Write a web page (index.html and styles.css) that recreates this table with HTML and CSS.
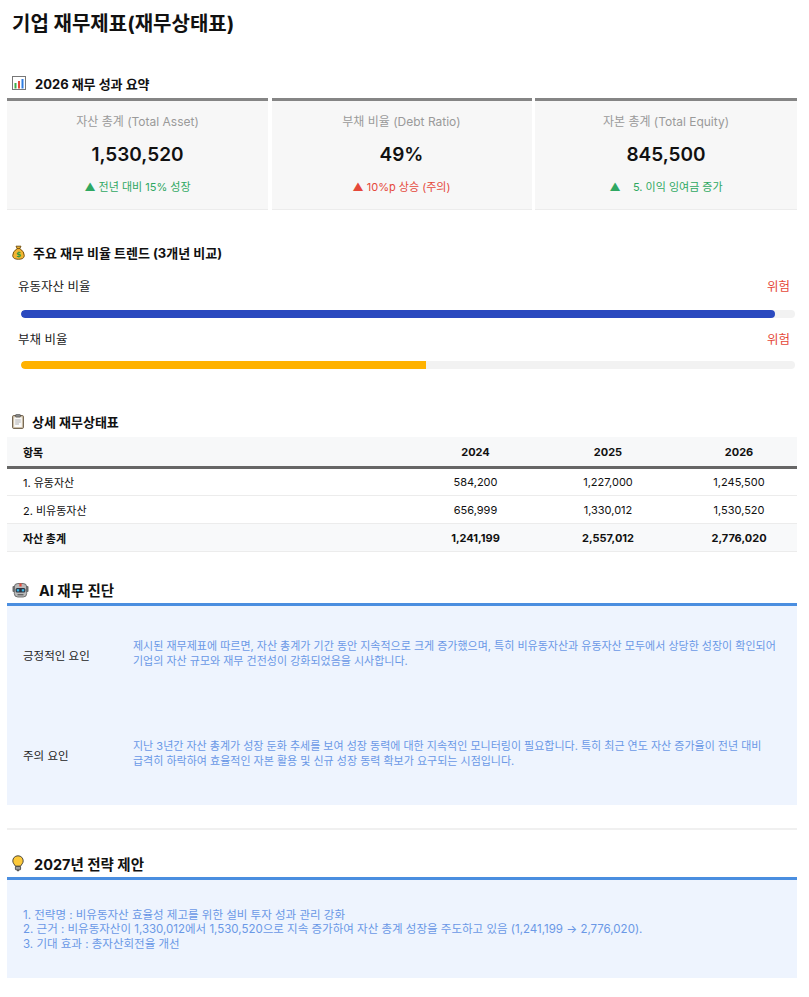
FILE: index.html
```html
<!DOCTYPE html>
<html lang="ko">
<head>
<meta charset="utf-8">
<title>기업 재무제표(재무상태표)</title>
<link rel="stylesheet" href="styles.css">
</head>
<body>
<div class="page">
  <h1 class="title">기업 재무제표(재무상태표)</h1>

  <h2 class="sec sec-1">
    <svg class="ico" width="14" height="14" viewBox="0 0 14 14"><rect x="0.5" y="0.5" width="13" height="13" fill="#fff" stroke="#777"/><rect x="2.5" y="7" width="2" height="5.5" fill="#3fae49"/><rect x="6" y="5" width="2" height="7.5" fill="#e5483a"/><rect x="9.5" y="3" width="2" height="9.5" fill="#2f7de1"/></svg>
    <span>2026 재무 성과 요약</span>
  </h2>
  <div class="cards">
    <div class="card">
      <div class="card-label">자산 총계 (Total Asset)</div>
      <div class="card-value">1,530,520</div>
      <div class="card-change up">▲ 전년 대비 15% 성장</div>
    </div>
    <div class="card">
      <div class="card-label">부채 비율 (Debt Ratio)</div>
      <div class="card-value">49%</div>
      <div class="card-change warn">▲ 10%p 상승 (주의)</div>
    </div>
    <div class="card">
      <div class="card-label">자본 총계 (Total Equity)</div>
      <div class="card-value">845,500</div>
      <div class="card-change up pre">▲    5. 이익 잉여금 증가</div>
    </div>
  </div>

  <h2 class="sec sec-2">
    <svg class="ico" width="13" height="15" viewBox="0 0 13 15"><path d="M4 1.2 L9 1.2 L7.8 3.6 Q12.6 6.5 12.3 10.8 Q12 14.3 6.5 14.3 Q1 14.3 0.7 10.8 Q0.4 6.5 5.2 3.6 Z" fill="#f2b531" stroke="#6b4a0c" stroke-width="0.9"/><path d="M5 3.6 L8 3.6" stroke="#6b4a0c" stroke-width="0.9"/><text x="6.5" y="12.2" font-size="7.5" font-weight="700" text-anchor="middle" fill="#2e9a3d" font-family="DejaVu Sans">$</text></svg>
    <span>주요 재무 비율 트렌드 (3개년 비교)</span>
  </h2>
  <div class="trends">
    <div class="trend">
      <div class="trend-head"><span>유동자산 비율</span><span class="risk">위험</span></div>
      <div class="track"><div class="fill blue" style="width:97.4%"></div></div>
    </div>
    <div class="trend">
      <div class="trend-head"><span>부채 비율</span><span class="risk">위험</span></div>
      <div class="track"><div class="fill orange" style="width:52.3%"></div></div>
    </div>
  </div>

  <h2 class="sec sec-3">
    <svg class="ico" width="12" height="15" viewBox="0 0 12 15"><rect x="0.6" y="1.6" width="10.8" height="12.8" rx="1" fill="#d9cdb6" stroke="#5a4a33" stroke-width="0.9"/><rect x="2.2" y="3.4" width="7.6" height="9.6" fill="#fafafa"/><rect x="3.6" y="0.5" width="4.8" height="2.6" rx="0.6" fill="#8a8a8a" stroke="#444" stroke-width="0.6"/><path d="M3.2 6 H8.8 M3.2 8 H8.8 M3.2 10 H7" stroke="#9a9a9a" stroke-width="0.8"/></svg>
    <span>상세 재무상태표</span>
  </h2>
  <table class="fin">
    <colgroup><col class="c1"><col class="c2"><col class="c3"><col class="c4"></colgroup>
    <thead>
      <tr><th class="item">항목</th><th>2024</th><th>2025</th><th class="last">2026</th></tr>
    </thead>
    <tbody>
      <tr><td class="item">1. 유동자산</td><td>584,200</td><td>1,227,000</td><td class="last">1,245,500</td></tr>
      <tr><td class="item">2. 비유동자산</td><td>656,999</td><td>1,330,012</td><td class="last">1,530,520</td></tr>
      <tr class="total"><td class="item">자산 총계</td><td>1,241,199</td><td>2,557,012</td><td class="last">2,776,020</td></tr>
    </tbody>
  </table>

  <h2 class="sec sec-4 big">
    <svg class="ico robot" width="17" height="16" viewBox="0 0 17 16"><rect x="0.5" y="4" width="2.6" height="6" rx="1" fill="#6f6f6f"/><rect x="13.9" y="4" width="2.6" height="6" rx="1" fill="#6f6f6f"/><rect x="2.3" y="1.5" width="12.4" height="13.5" rx="3.5" fill="#b9b9b9" stroke="#555" stroke-width="0.8"/><rect x="7.4" y="1.5" width="2.2" height="3" fill="#e84a3a"/><rect x="3.6" y="6" width="9.8" height="4.6" rx="1.5" fill="#2f3440"/><rect x="4.8" y="7.2" width="2.4" height="2.2" fill="#37b7e8"/><rect x="9.8" y="7.2" width="2.4" height="2.2" fill="#37b7e8"/><rect x="5.5" y="12" width="6" height="1.4" fill="#666"/></svg>
    <span>AI 재무 진단</span>
  </h2>
  <div class="diag">
    <div class="diag-row">
      <div class="diag-label">긍정적인 요인</div>
      <div class="diag-text">제시된 재무제표에 따르면, 자산 총계가 기간 동안 지속적으로 크게 증가했으며, 특히 비유동자산과 유동자산 모두에서 상당한 성장이 확인되어 기업의 자산 규모와 재무 건전성이 강화되었음을 시사합니다.</div>
    </div>
    <div class="diag-row">
      <div class="diag-label">주의 요인</div>
      <div class="diag-text">지난 3년간 자산 총계가 성장 둔화 추세를 보여 성장 동력에 대한 지속적인 모니터링이 필요합니다. 특히 최근 연도 자산 증가율이 전년 대비 급격히 하락하여 효율적인 자본 활용 및 신규 성장 동력 확보가 요구되는 시점입니다.</div>
    </div>
  </div>

  <div class="divider"></div>

  <h2 class="sec sec-5 big">
    <svg class="ico" width="12" height="17" viewBox="0 0 12 17"><path d="M6 0.8 C2.8 0.8 0.8 3.2 0.8 5.9 C0.8 8.4 2.6 9.4 3.4 11.2 L8.6 11.2 C9.4 9.4 11.2 8.4 11.2 5.9 C11.2 3.2 9.2 0.8 6 0.8 Z" fill="#fcc93a" stroke="#3a3a3a" stroke-width="0.9"/><rect x="3.4" y="11.4" width="5.2" height="3.4" rx="0.6" fill="#9a9a9a" stroke="#3a3a3a" stroke-width="0.8"/><path d="M4.6 15 H7.4 L6.8 16.3 H5.2 Z" fill="#555"/></svg>
    <span>2027년 전략 제안</span>
  </h2>
  <div class="strategy">
    <p>1. 전략명 : 비유동자산 효율성 제고를 위한 설비 투자 성과 관리 강화</p>
    <p>2. 근거 : 비유동자산이 1,330,012에서 1,530,520으로 지속 증가하여 자산 총계 성장을 주도하고 있음 (1,241,199 → 2,776,020).</p>
    <p>3. 기대 효과 : 총자산회전율 개선</p>
  </div>
</div>
</body>
</html>
```

FILE: styles.css
```css
* { box-sizing: border-box; }
html, body { margin: 0; padding: 0; background: #fff; }
body {
  font-family: "Inter", "Noto Sans CJK KR", "Noto Sans", sans-serif;
  color: #111;
}
.page {
  width: 790px;
  margin-left: 7px;
}
.title {
  margin: 0;
  padding: 9px 5px 0;
  font-size: 20px;
  line-height: 30px;
  font-weight: 700;
  color: #111;
}
.sec {
  display: flex;
  align-items: center;
  gap: 8px;
  margin: 0;
  padding-left: 5px;
  height: 20px;
  font-size: 13px;
  font-weight: 700;
  color: #111;
}
.sec.big { font-size: 14.5px; }
.ico { flex: none; }
.sec-1 { margin-top: 34px; margin-bottom: 5px; }
.sec-1 .ico { margin-right: 1px; }
.sec-2 { margin-top: 32px; }
.sec-3 { margin-top: 42px; margin-bottom: 6px; }
.sec-4 { margin-top: 28px; margin-bottom: 3px; gap: 10px; }
.sec-5 { margin-top: 24px; margin-bottom: 3px; gap: 10px; }

.cards {
  display: grid;
  grid-template-columns: 261px 260px 262px;
  column-gap: 3.5px;
}
.card {
  background: #f7f7f7;
  border-top: 3px solid #858585;
  border-bottom: 1px solid #ececec;
  padding: 12px 0 14px;
  text-align: center;
}
.card-label {
  font-size: 12px;
  line-height: 18px;
  color: #9a9a9a;
}
.card-value {
  margin-top: 11px;
  font-size: 19px;
  line-height: 26px;
  font-weight: 600;
  color: #111;
}
.card-change {
  margin-top: 11px;
  font-size: 11px;
  line-height: 16px;
}
.card-change.pre { white-space: pre; }
.up { color: #2fa862; }
.warn { color: #e5483a; }

.trends { padding: 16px 2px 0 0; }
.trend + .trend { margin-top: 13px; }
.trend-head {
  display: flex;
  justify-content: space-between;
  padding: 0 5px 0 11px;
  font-size: 12.5px;
  line-height: 18px;
  color: #222;
}
.risk { color: #e5483a; }
.track {
  margin: 14px 0 0 14px;
  height: 8px;
  background: #f2f2f2;
  border-radius: 4px;
  overflow: hidden;
}
.trend + .trend .track { margin-top: 12px; }
.fill { height: 100%; border-radius: 4px; }
.fill.blue { background: #2a49bf; }
.fill.orange { background: #ffb200; border-radius: 4px 0 0 4px; }

.fin {
  width: 790px;
  border-collapse: collapse;
  table-layout: fixed;
  font-size: 11px;
  color: #111;
}
.fin col.c1 { width: 401px; }
.fin col.c2 { width: 135px; }
.fin col.c3 { width: 130px; }
.fin col.c4 { width: 124px; }
.fin th, .fin td {
  text-align: center;
  padding: 0;
}
.fin th.item, .fin td.item { text-align: left; padding-left: 16px; }
.fin th.last, .fin td.last { padding-left: 8px; }
.fin thead th {
  height: 30px;
  padding-top: 1px;
  background: #f7f8f9;
  border-bottom: 3px solid #666;
  font-weight: 700;
}
.fin tbody td {
  height: 28px;
  padding-top: 1px;
  border-bottom: 1px solid #ececec;
}
.fin tr.total td {
  background: #f8f9fa;
  font-weight: 700;
}

.diag {
  background: #eef4fe;
  border-top: 3px solid #4a8ee0;
  height: 202px;
}
.diag-row {
  display: flex;
  align-items: center;
  height: 100px;
  padding-left: 16px;
}
.diag-label {
  width: 110px;
  flex: none;
  font-size: 11.5px;
  color: #222;
  margin-top: -1px;
}
.diag-text {
  width: 660px;
  font-size: 11px;
  line-height: 15px;
  color: #6a98e6;
  word-break: keep-all;
  margin-top: -4px;
}

.divider {
  margin-top: 23px;
  height: 2px;
  background: #f0f0f0;
}

.strategy {
  background: #eef4fe;
  border-top: 3px solid #4a8ee0;
  height: 101px;
  padding: 28px 16px 0;
}
.strategy p {
  margin: 0;
  font-size: 11.5px;
  line-height: 14.5px;
  color: #6a98e6;
}
```
